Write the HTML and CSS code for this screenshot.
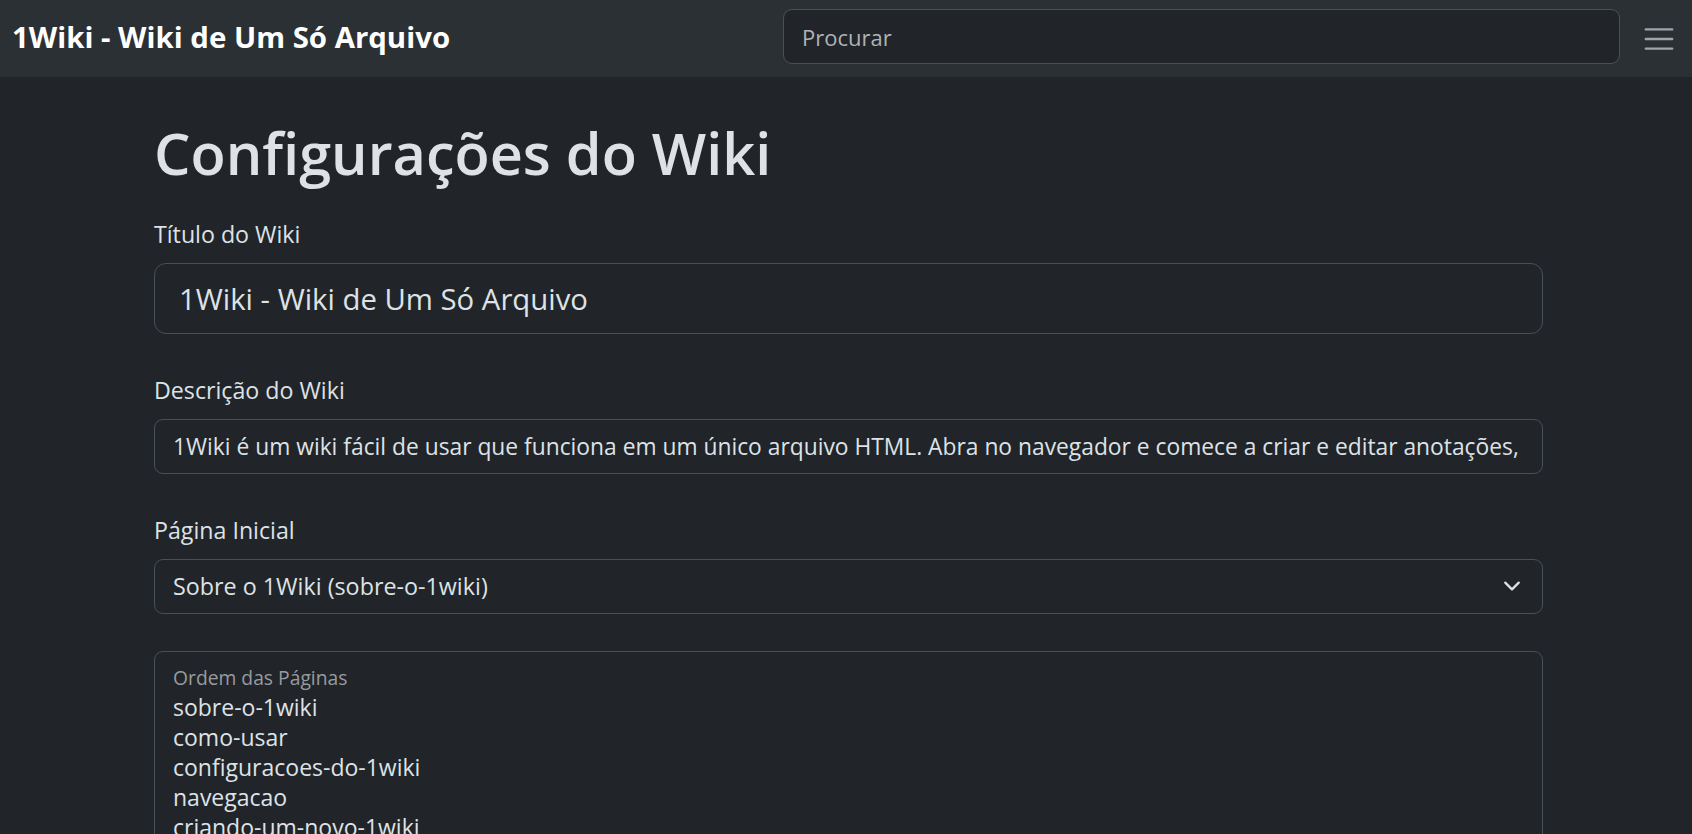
FILE: index.html
```html
<!DOCTYPE html>
<html lang="pt-BR">
<head>
<meta charset="utf-8">
<title>Configurações do Wiki - 1Wiki</title>
<link rel="stylesheet" href="styles.css">
</head>
<body>
<nav class="navbar">
  <a class="brand" href="#">1Wiki - Wiki de Um Só Arquivo</a>
  <form class="search" role="search">
    <input class="search-input" type="search" placeholder="Procurar" aria-label="Procurar">
  </form>
  <button class="toggler" type="button" aria-label="Abrir menu">
    <svg class="toggler-icon" width="36" height="36" viewBox="0 0 30 30" aria-hidden="true">
      <path d="M4 7h22M4 15h22M4 23h22" fill="none" stroke="currentColor" stroke-width="2" stroke-linecap="round"/>
    </svg>
  </button>
</nav>

<main class="page">
  <h1 class="page-title">Configurações do Wiki</h1>
  <form class="settings">
    <div class="field">
      <label class="field-label" for="wiki-title">Título do Wiki</label>
      <input id="wiki-title" class="control control-lg" type="text" value="1Wiki - Wiki de Um Só Arquivo">
    </div>
    <div class="field">
      <label class="field-label" for="wiki-desc">Descrição do Wiki</label>
      <input id="wiki-desc" class="control" type="text" value="1Wiki é um wiki fácil de usar que funciona em um único arquivo HTML. Abra no navegador e comece a criar e editar anotações, páginas e links.">
    </div>
    <div class="field">
      <label class="field-label" for="wiki-home">Página Inicial</label>
      <div class="select-wrap">
        <select id="wiki-home" class="control select">
          <option selected>Sobre o 1Wiki (sobre-o-1wiki)</option>
          <option>Como Usar (como-usar)</option>
          <option>Configurações do 1Wiki (configuracoes-do-1wiki)</option>
          <option>Navegação (navegacao)</option>
          <option>Criando um Novo 1Wiki (criando-um-novo-1wiki)</option>
        </select>
        <svg class="select-chevron" width="18" height="18" viewBox="0 0 16 16" aria-hidden="true">
          <path d="m2 5 6 6 6-6" fill="none" stroke="currentColor" stroke-width="2" stroke-linecap="round" stroke-linejoin="round"/>
        </svg>
      </div>
    </div>
    <div class="floating">
      <label class="floating-label" for="wiki-order">Ordem das Páginas</label>
      <textarea id="wiki-order" class="floating-text" rows="10">sobre-o-1wiki
como-usar
configuracoes-do-1wiki
navegacao
criando-um-novo-1wiki</textarea>
    </div>
  </form>
</main>
</body>
</html>
```

FILE: styles.css
```css
html {
  scrollbar-width: none;
}
html::-webkit-scrollbar {
  display: none;
}

body {
  margin: 0;
  background: #212529;
  color: #dee2e6;
  font-family: "Open Sans", "Noto Sans", "DejaVu Sans", sans-serif;
  font-size: 23px;
  line-height: 1.5;
}

/* ---------- navbar ---------- */
.navbar {
  display: flex;
  align-items: center;
  height: 77px;
  box-sizing: border-box;
  padding: 9px 15px 13px 12px;
  background: #2b3035;
}

.brand {
  flex: none;
  margin-top: 3px;
  color: #ffffff;
  font-size: 29.4px;
  font-weight: 700;
  line-height: 1.2;
  text-decoration: none;
}

.search {
  margin: 0 0 0 auto;
}

.search-input {
  display: block;
  width: 837px;
  height: 55px;
  box-sizing: border-box;
  padding: 0 18px;
  background: #212529;
  border: 1px solid #495057;
  border-radius: 9px;
  color: #dee2e6;
  font-family: inherit;
  font-size: 22px;
  outline: none;
}

.search-input::placeholder {
  color: #afb3b7;
}

.toggler {
  flex: none;
  display: flex;
  margin: 5px 0 0 21px;
  padding: 0;
  background: none;
  border: 0;
  color: #a0a5aa;
  cursor: pointer;
}

.toggler-icon {
  display: block;
}

/* ---------- page ---------- */
.page {
  max-width: 1389px;
  margin-left: 154px;
  padding-top: 41px;
}

.page-title {
  margin: 0 0 28px;
  font-size: 57.6px;
  font-weight: 600;
  line-height: 70px;
  color: #dee2e6;
}

.settings {
  display: flex;
  flex-direction: column;
  gap: 37.8px;
}

.field {
  display: flex;
  flex-direction: column;
  gap: 11px;
}

.field-label {
  font-size: 23.2px;
  line-height: 36px;
}

.control {
  display: block;
  width: 100%;
  height: 55px;
  box-sizing: border-box;
  margin: 0;
  padding: 0 18px;
  background: #212529;
  border: 1px solid #495057;
  border-radius: 9px;
  color: #dee2e6;
  font-family: inherit;
  font-size: 22.8px;
  outline: none;
}

.control-lg {
  height: 71px;
  padding: 0 24px;
  border-radius: 12px;
  font-size: 29.3px;
}

.select-wrap {
  position: relative;
}

.select {
  appearance: none;
  -webkit-appearance: none;
  padding-right: 54px;
  font-size: 23.3px;
}

.select-chevron {
  position: absolute;
  right: 22px;
  top: 50%;
  margin-top: -9px;
  color: #dee2e6;
  pointer-events: none;
}

/* ---------- floating textarea ---------- */
.floating {
  display: flex;
  flex-direction: column;
  padding: 13.5px 0 0;
  border: 1px solid #495057;
  border-radius: 9px;
  background: #212529;
}

.floating-label {
  padding: 0 18px;
  color: #979b9f;
  font-size: 19.3px;
  line-height: 24px;
}

.floating-text {
  display: block;
  height: 320px;
  margin: 2px 0 0;
  padding: 0 18px;
  background: transparent;
  border: 0;
  color: #dee2e6;
  font-family: inherit;
  font-size: 23px;
  line-height: 30px;
  resize: none;
  outline: none;
}
```
